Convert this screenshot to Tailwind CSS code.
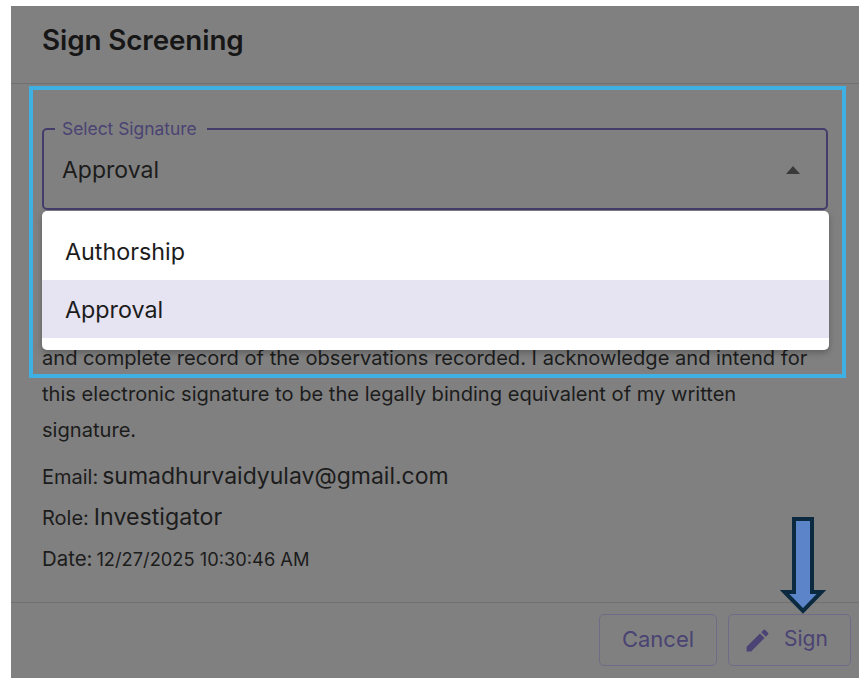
<!DOCTYPE html>
<html lang="en">
  <head>
    <meta charset="UTF-8" />
    <title>Sign Screening</title>
    <script src="https://cdn.jsdelivr.net/npm/@tailwindcss/browser@4"></script>
  </head>
  <body class="bg-white h-[685px] w-[865px] overflow-hidden relative font-['Inter',sans-serif]">
    <!-- Dialog, dimmed by the backdrop -->
    <div class="ml-[11px] mt-[6px] w-[848px] h-[672px] bg-[#808080] flex flex-col text-[#1a1a1a]">
      <div class="h-[78px] shrink-0 border-b border-[#707070] pl-[31px] pt-[16px]">
        <h2 class="text-[27.8px] leading-[36px] font-semibold text-[#161616] tracking-[-0.1px]">Sign Screening</h2>
      </div>

      <div class="flex-1 pl-[31px] pr-[31px] relative">
        <!-- Select field -->
        <fieldset class="mt-[38px] h-[88px] w-[786px] border-[2.5px] border-[#453c6b] rounded-[5px] pl-[18px] pr-[26px] flex items-center justify-between">
          <legend class="pl-[7px] pr-[10px] ml-[-7px] text-[17.4px] leading-[14px] text-[#4a4373]">Select Signature</legend>
          <span class="text-[23px] text-[#1c1c1c] -mt-[4px]">Approval</span>
          <svg width="14" height="8" viewBox="0 0 14 8" class="-mt-[4px]"><path d="M0 8 7 0l7 8z" fill="#3a3a3a" /></svg>
        </fieldset>

        <!-- Text underneath the open menu -->
        <div class="mt-[130px] w-[786px] text-[20.1px] leading-[36px] text-[#1c1c1c]">
          <p>and complete record of the observations recorded. I acknowledge and intend for this electronic signature to be the legally binding equivalent of my written signature.</p>
        </div>
        <div class="mt-[11px] flex flex-col gap-[8px] text-[#1c1c1c]">
          <p class="h-[33px] flex items-baseline gap-[4px] text-[20px]">Email: <span class="text-[23px]">sumadhurvaidyulav@gmail.com</span></p>
          <p class="h-[33px] flex items-baseline gap-[5px] text-[20px]">Role: <span class="text-[23.2px]">Investigator</span></p>
          <p class="h-[33px] mt-[3px] flex items-baseline gap-[4px] text-[20.4px]">Date: <span class="text-[18.3px]">12/27/2025 10:30:46 AM</span></p>
        </div>

        <!-- Open menu -->
        <ul class="absolute left-[31px] top-[127px] w-[787px] h-[139px] bg-white rounded-[5px] py-[10px] shadow-[0_3px_6px_rgba(0,0,0,0.25)] text-[23.3px] text-[#1c1c1c]">
          <li class="h-[59px] pl-[23px] pt-[3px] flex items-center">Authorship</li>
          <li class="h-[58px] pl-[23px] pt-[2px] flex items-center bg-[#e6e3f2]">Approval</li>
        </ul>
      </div>

      <div class="h-[76px] shrink-0 border-t border-[#707070] flex justify-end gap-[11px] pt-[11px] pr-[8px]">
        <button class="w-[118px] h-[52px] pb-[2px] border border-[#6f6b87] rounded-[5px] text-[22px] text-[#4a4373]">Cancel</button>
        <button class="w-[123px] h-[52px] pl-[14px] border border-[#6f6b87] rounded-[5px] text-[21px] text-[#4a4373] flex items-center gap-[12px]">
          <svg width="29" height="29" viewBox="0 0 24 24" fill="#4a4373"><path d="M3 17.25V21h3.75L17.81 9.94l-3.75-3.75L3 17.25zM20.71 7.04a1 1 0 0 0 0-1.41l-2.34-2.34a1 1 0 0 0-1.41 0l-1.83 1.83 3.75 3.75 1.83-1.83z" /></svg>
          <span class="-mt-[2px]">Sign</span>
        </button>
      </div>
    </div>

    <!-- Annotation overlays -->
    <div class="absolute left-[29px] top-[86px] w-[817px] h-[292px] border-[4px] border-[#3fb0e4]"></div>
    <svg class="absolute left-[780px] top-[515px]" width="48" height="102" viewBox="0 0 48 102">
      <path d="M14 4H32V77H41.5L23 96 4.5 77H14z" fill="#5b84c9" stroke="#0b2a40" stroke-width="4" />
    </svg>
  </body>
</html>
